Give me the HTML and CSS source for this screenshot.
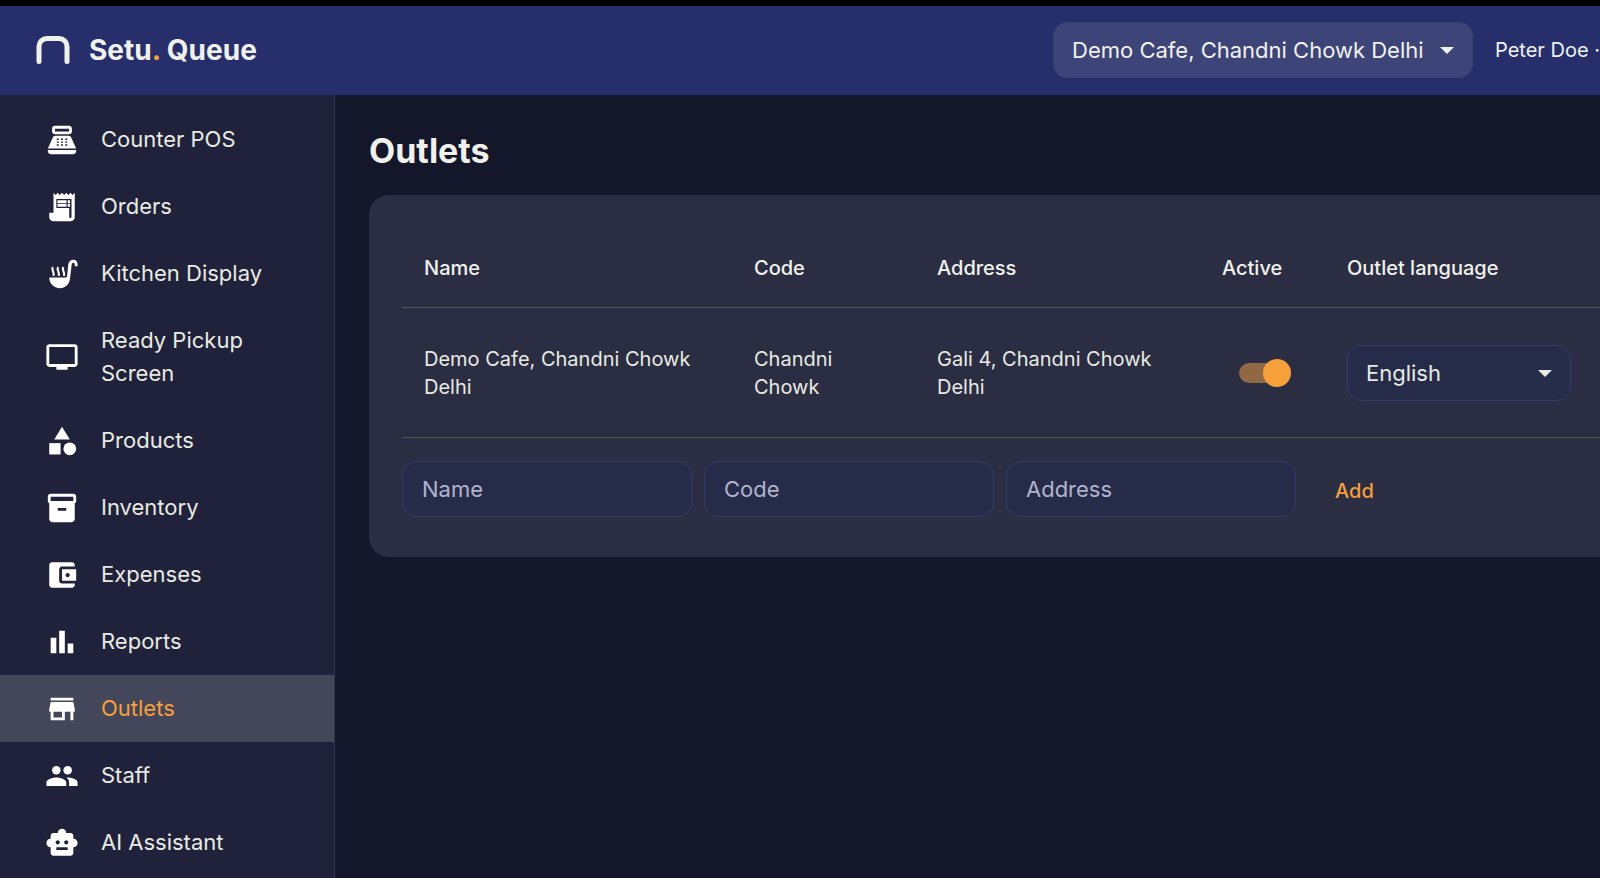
FILE: index.html
```html
<!DOCTYPE html>
<html lang="en">
  <head>
    <meta charset="UTF-8" />
    <meta name="viewport" content="width=device-width, initial-scale=1.0"/>
    <title>Setu. Queue - Outlets</title>
    <link rel="stylesheet" href="styles.css">
  </head>
  <body>
    <header class="header">
      <a class="brand" href="#">
        <svg class="brand-logo" viewBox="0 0 34 28"><path d="M3 25.5V10.5a8 8 0 0 1 8-8h12a8 8 0 0 1 8 8v15" fill="none" stroke="currentColor" stroke-width="5" stroke-linecap="round"/></svg>
        <span>Setu<span class="dot">.</span> Queue</span>
      </a>
      <div class="select outlet-select">
        <select aria-label="Current outlet">
          <option>Demo Cafe, Chandni Chowk Delhi</option>
        </select>
        <svg class="caret" viewBox="0 0 14 7"><path d="M0 0h14L7 7z"/></svg>
      </div>
      <span class="user">Peter Doe ·</span>
    </header>

    <div class="layout">
      <nav class="sidebar">
        <a href="#">
          <svg viewBox="0 0 24 24"><path fill-rule="evenodd" d="M17 2H7c-1.1 0-2 .9-2 2v2c0 1.1.9 2 2 2h10c1.1 0 2-.9 2-2V4c0-1.1-.9-2-2-2zm0 4H7V4h10v2zm3 16H4c-1.1 0-2-.9-2-2v-1h20v1c0 1.1-.9 2-2 2zM18.5 10.2C18.2 9.5 17.5 9 16.7 9H7.3c-.8 0-1.5.5-1.8 1.2L2 18h20zM8.3 11h1.4v1H8.3zM11.3 11h1.4v1h-1.4zM14.3 11h1.4v1h-1.4zM8.3 13h1.4v1H8.3zM11.3 13h1.4v1h-1.4zM14.3 13h1.4v1h-1.4zM8.3 15h1.4v1H8.3zM11.3 15h1.4v1h-1.4zM14.3 15h1.4v1h-1.4z"/></svg>
          Counter POS
        </a>
        <a href="#">
          <svg viewBox="0 0 24 24"><path fill-rule="evenodd" d="M19.5 3.5L18 2l-1.5 1.5L15 2l-1.5 1.5L12 2l-1.5 1.5L9 2 7.5 3.5 6 2v14H3v3c0 1.7 1.3 3 3 3h12c1.7 0 3-1.3 3-3V2zM8 6.3h10.7V19a.8.8 0 0 1-1.6 0v-6.3H8z"/><path d="M8.8 7.2h6.4v2.1H8.8zM16 7.2h1.7v2.1H16zM8.8 9.8h6.4v2H8.8zM16 9.8h1.7v2H16z"/></svg>
          Orders
        </a>
        <a href="#">
          <svg viewBox="0 0 24 24"><path d="M3 14.5h11.5c.8 0 1-.4 1.1-1.2l.8-7.8C16.7 3.3 18.2 2 20 2s3 1.3 3 3.2v1.3h-2V5.3c0-.8-.4-1.3-1-1.3s-1.1.6-1.2 1.6L17.7 15c-.4 4.2-3.2 7-7.2 7C6.2 22 3 18.7 3 14.5z"/><path d="M5.5 7c-1.4 2.6 1.6 3.6.4 6.3M9.2 7c-1.4 2.6 1.6 3.6.4 6.3M12.9 7c-1.4 2.6 1.6 3.6.4 6.3" fill="none" stroke="currentColor" stroke-width="1.5"/></svg>
          Kitchen Display
        </a>
        <a href="#">
          <svg viewBox="0 0 24 24"><path d="M21 3H3c-1.1 0-2 .9-2 2v12c0 1.1.9 2 2 2h5v2h8v-2h5c1.1 0 2-.9 2-2V5c0-1.1-.9-2-2-2zm0 14H3V5h18v12z"/></svg>
          Ready Pickup Screen
        </a>
        <a href="#">
          <svg viewBox="0 0 24 24"><path d="M12 2l-5.5 9h11z"/><circle cx="17.5" cy="17.5" r="4.5"/><path d="M3 13.5h8v8H3z"/></svg>
          Products
        </a>
        <a href="#">
          <svg viewBox="0 0 24 24"><path d="M20 2H4c-1 0-2 .9-2 2v3c0 .7.4 1.3 1 1.7V20c0 1.1 1.1 2 2 2h14c.9 0 2-.9 2-2V8.7c.6-.4 1-1 1-1.7V4c0-1.1-1-2-2-2zm-5 12H9v-2h6v2zm5-7H4V4h16v3z"/></svg>
          Inventory
        </a>
        <a href="#">
          <svg viewBox="0 0 24 24"><path d="M21 18v1c0 1.1-.9 2-2 2H5c-1.1 0-2-.9-2-2V5c0-1.1.9-2 2-2h14c1.1 0 2 .9 2 2v1h-9c-1.1 0-2 .9-2 2v8c0 1.1.9 2 2 2h9zm-9-2h10V8H12v8zm4-2.5c-.8 0-1.5-.7-1.5-1.5s.7-1.5 1.5-1.5 1.5.7 1.5 1.5-.7 1.5-1.5 1.5z"/></svg>
          Expenses
        </a>
        <a href="#">
          <svg viewBox="0 0 24 24"><path d="M4 9h4v11H4zM16 13h4v7h-4zM10 4h4v16h-4z"/></svg>
          Reports
        </a>
        <a class="active" href="#">
          <svg viewBox="0 0 24 24"><path d="M20 4H4v2h16V4zm1 10v-2l-1-5H4l-1 5v2h1v6h10v-6h4v6h2v-6h1zm-9 4H6v-4h6v4z"/></svg>
          Outlets
        </a>
        <a href="#">
          <svg viewBox="0 0 24 24"><circle cx="16" cy="8" r="3"/><circle cx="8" cy="8" r="3"/><path d="M8 13c-2.3 0-7 1.2-7 3.5V19h14v-2.5c0-2.3-4.7-3.5-7-3.5zM16 13c-.3 0-.6 0-1 .1 1.2.8 2 1.9 2 3.4V19h6v-2.5c0-2.3-4.7-3.5-7-3.5z"/></svg>
          Staff
        </a>
        <a href="#">
          <svg viewBox="0 0 24 24"><path d="M20 9V7c0-1.1-.9-2-2-2h-3c0-1.7-1.3-3-3-3S9 3.3 9 5H6c-1.1 0-2 .9-2 2v2c-1.7 0-3 1.3-3 3s1.3 3 3 3v4c0 1.1.9 2 2 2h12c1.1 0 2-.9 2-2v-4c1.7 0 3-1.3 3-3s-1.3-3-3-3zM7.5 11.5c0-.8.7-1.5 1.5-1.5s1.5.7 1.5 1.5S9.8 13 9 13s-1.5-.7-1.5-1.5zM16 17H8v-2h8v2zm-1-4c-.8 0-1.5-.7-1.5-1.5S14.2 10 15 10s1.5.7 1.5 1.5S15.8 13 15 13z"/></svg>
          AI Assistant
        </a>
      </nav>

      <main class="content">
        <h1>Outlets</h1>
        <section class="card">
          <table>
            <thead>
              <tr>
                <th class="col-name">Name</th>
                <th class="col-code">Code</th>
                <th class="col-address">Address</th>
                <th class="col-active">Active</th>
                <th>Outlet language</th>
              </tr>
            </thead>
            <tbody>
              <tr>
                <td>Demo Cafe, Chandni Chowk Delhi</td>
                <td>Chandni Chowk</td>
                <td>Gali 4, Chandni Chowk Delhi</td>
                <td><input class="switch" type="checkbox" aria-label="Active" checked></td>
                <td>
                  <div class="select language-select">
                    <select aria-label="Outlet language">
                      <option>English</option>
                      <option>Hindi</option>
                    </select>
                    <svg class="caret" viewBox="0 0 14 7"><path d="M0 0h14L7 7z"/></svg>
                  </div>
                </td>
              </tr>
            </tbody>
          </table>
          <form class="add-form">
            <input type="text" placeholder="Name" aria-label="Name">
            <input type="text" placeholder="Code" aria-label="Code">
            <input type="text" placeholder="Address" aria-label="Address">
            <button type="button">Add</button>
          </form>
        </section>
      </main>
    </div>
  </body>
</html>
```

FILE: styles.css
```css
* {
  box-sizing: border-box;
}
body {
  margin: 0;
  min-height: 100vh;
  display: flex;
  flex-direction: column;
  border-top: 6px solid #000;
  background: #14162a;
  color: #f1f1ec;
  font-family: Inter, "Liberation Sans", sans-serif;
  font-size: 20px;
  line-height: 28px;
  overflow: hidden;
}
a {
  color: inherit;
  text-decoration: none;
}
svg {
  fill: currentColor;
  flex-shrink: 0;
}
input,
select,
button {
  font: inherit;
  color: inherit;
}

/* Header */
.header {
  display: flex;
  align-items: center;
  height: 89px;
  padding: 0 0 2px 36px;
  background: #262f6b;
}
.brand {
  display: flex;
  align-items: center;
  gap: 19px;
  margin-right: auto;
  font-size: 28px;
  font-weight: 700;
}
.brand-logo {
  width: 34px;
  height: 28px;
}
.dot {
  color: #f6a03c;
}
.user {
  margin-left: 22px;
  white-space: nowrap;
}

/* Selects */
.select {
  position: relative;
}
.select select {
  appearance: none;
  width: 100%;
  height: 56px;
  padding: 0 48px 0 18px;
  border: 1px solid #353c66;
  border-radius: 14px;
  background: #262b4a;
  font-size: 22px;
}
.outlet-select select {
  border-color: #394074;
  background: #3d4478;
}
.caret {
  position: absolute;
  top: 25px;
  right: 19px;
  width: 14px;
  height: 7px;
  pointer-events: none;
}

/* Sidebar */
.layout {
  display: flex;
  flex: 1;
}
.sidebar {
  flex: 0 0 335px;
  padding-top: 11px;
  border-right: 1px solid #36384e;
  background: #20213a;
}
.sidebar a {
  display: flex;
  align-items: center;
  gap: 22px;
  padding: 17px 60px 17px 45px;
  color: #e8ebe2;
  font-size: 22px;
  line-height: 33px;
}
.sidebar svg {
  width: 34px;
  height: 34px;
  margin: -1px 0;
  color: #fff;
}
.sidebar .active {
  background: #444659;
  color: #f6a03c;
}

/* Content */
.content {
  flex: 1;
  min-width: 0;
  padding: 35px 0 34px 34px;
}
h1 {
  margin: 0 0 23px;
  font-size: 34px;
  line-height: 42px;
}
.card {
  padding: 33px 0 40px 33px;
  border-radius: 20px 0 0 20px;
  background: #2b2d43;
}
table {
  width: 100%;
  border-collapse: collapse;
  table-layout: fixed;
}
th,
td {
  padding: 2px 22px 0;
  border-bottom: 1px solid #54564f;
  text-align: left;
}
th {
  height: 79px;
  font-weight: 500;
}
td {
  height: 130px;
  color: #e8ebe2;
}
.col-name {
  width: 330px;
}
.col-code {
  width: 183px;
}
.col-address {
  width: 285px;
}
.col-active {
  width: 125px;
}

.switch {
  appearance: none;
  display: flex;
  align-items: center;
  justify-content: flex-end;
  width: 52px;
  height: 20px;
  margin: 0 0 0 17px;
  border-radius: 10px;
  background: #906843;
}
.switch::before {
  content: "";
  width: 28px;
  height: 28px;
  border-radius: 50%;
  background: #f6a03c;
}
.language-select {
  max-width: 224px;
}

.add-form {
  display: flex;
  align-items: center;
  gap: 12px;
  padding-top: 23px;
}
.add-form input {
  flex: 0 1 290px;
  min-width: 0;
  height: 56px;
  padding: 0 19px;
  border: 1px solid #353a64;
  border-radius: 14px;
  background: #272b4a;
  font-size: 22px;
}
.add-form input::placeholder {
  color: #b0b3cb;
}
.add-form button {
  padding: 4px 27px 0;
  border: 0;
  background: none;
  color: #f6a03c;
  font-weight: 500;
}
```
